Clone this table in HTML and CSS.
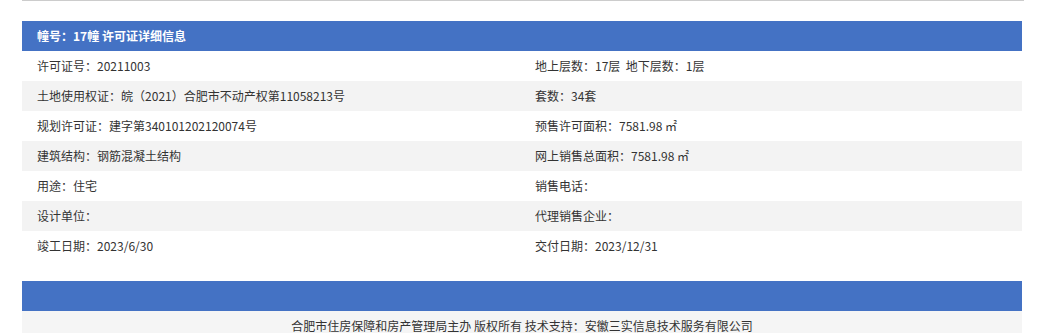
FILE: index.html
```html
<!DOCTYPE html>
<html lang="zh-CN">
<head>
<meta charset="utf-8">
<title>许可证详细信息</title>
<link rel="stylesheet" href="styles.css">
</head>
<body>
<div class="page">
  <div class="topline"></div>
  <div class="panel">
    <div class="panel-head">幢号<span class="p">：</span>17幢 许可证详细信息</div>
    <div class="row"><div class="cell">许可证号<span class="p">：</span>20211003</div><div class="cell">地上层数<span class="p">：</span>17层&nbsp;&nbsp;地下层数<span class="p">：</span>1层</div></div>
    <div class="row alt"><div class="cell">土地使用权证<span class="p">：</span>皖<span class="p">（</span>2021<span class="p">）</span>合肥市不动产权第11058213号</div><div class="cell">套数<span class="p">：</span>34套</div></div>
    <div class="row"><div class="cell">规划许可证<span class="p">：</span>建字第340101202120074号</div><div class="cell">预售许可面积<span class="p">：</span>7581.98 ㎡</div></div>
    <div class="row alt"><div class="cell">建筑结构<span class="p">：</span>钢筋混凝土结构</div><div class="cell">网上销售总面积<span class="p">：</span>7581.98 ㎡</div></div>
    <div class="row"><div class="cell">用途<span class="p">：</span>住宅</div><div class="cell">销售电话<span class="p">：</span></div></div>
    <div class="row alt"><div class="cell">设计单位<span class="p">：</span></div><div class="cell">代理销售企业<span class="p">：</span></div></div>
    <div class="row"><div class="cell">竣工日期<span class="p">：</span>2023/6/30</div><div class="cell">交付日期<span class="p">：</span>2023/12/31</div></div>
  </div>
  <div class="footer-bar"></div>
  <div class="footer">合肥市住房保障和房产管理局主办 版权所有 技术支持<span class="p">：</span>安徽三实信息技术服务有限公司</div>
</div>
</body>
</html>
```
FILE: styles.css
```css
html, body {
  margin: 0;
  padding: 0;
  background: #fff;
}
body {
  font-family: "Noto Sans CJK SC", "Noto Sans", sans-serif;
  font-size: 12px;
  color: #333;
}
.p {
  font-family: "Noto Sans CJK TC", "Noto Sans CJK SC", sans-serif;
}
.page {
  width: 1000px;
  margin-left: 22px;
}
.topline {
  height: 1px;
  background: #cccccc;
  width: 1002px;
}
.panel {
  margin-top: 20px;
}
.panel-head {
  height: 30px;
  line-height: 30px;
  background: #4472c4;
  color: #fff;
  font-weight: bold;
  padding-left: 15px;
}
.row {
  display: grid;
  grid-template-columns: 498px 1fr;
  height: 30px;
  line-height: 30px;
  background: #fff;
}
.row.alt {
  background: #f3f3f3;
}
.cell {
  padding-left: 15px;
  white-space: nowrap;
}
.footer-bar {
  margin-top: 20px;
  height: 30px;
  background: #4472c4;
}
.footer {
  background: #f5f5f5;
  text-align: center;
  padding-top: 7px;
  height: 40px;
  line-height: 16px;
}
```
